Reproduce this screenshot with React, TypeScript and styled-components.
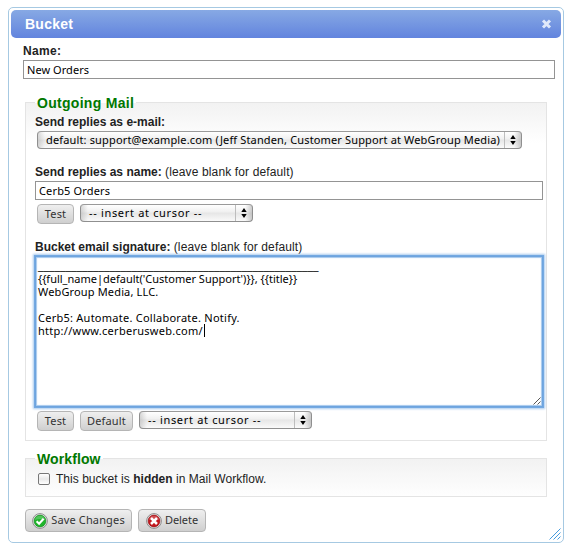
import React from 'react';
import styled, { createGlobalStyle } from 'styled-components';

const GlobalStyle = createGlobalStyle`
  *, *::before, *::after { box-sizing: border-box; }
  body {
    margin: 0;
    background: #fff;
    color: #222;
    font: 12px/16px "Liberation Sans", Arial, sans-serif;
  }
`;

const uiFont = '"Noto Sans", "Open Sans", sans-serif';

const Dialog = styled.section`
  position: relative;
  width: 556px;
  height: 536px;
  margin: 7px 0 0 8px;
  padding: 2px;
  border: 1px solid #a6c9e2;
  border-radius: 5px;
`;

const TitleBar = styled.header`
  display: flex;
  align-items: center;
  justify-content: space-between;
  height: 28px;
  padding: 0 9px 0 14px;
  border-radius: 5px;
  background: linear-gradient(#87a9e4, #6284de);
  color: #fff;
`;

const Title = styled.h1`
  margin: 0;
  font-size: 14px;
  line-height: 28px;
  letter-spacing: 0.25px;
`;

const Form = styled.form`
  padding: 5px 6px 0 12px;
`;

const Spacer = styled.div<{ $h: number }>`
  height: ${p => p.$h}px;
`;

const Label = styled.div<{ $track?: number }>`
  height: 16px;
  white-space: nowrap;
  letter-spacing: ${p => p.$track ?? 0}px;
`;

const Hint = styled.span`
  letter-spacing: 0.13px;
`;

const TextField = styled.input<{ $height: number; $track: number }>`
  display: block;
  width: 100%;
  height: ${p => p.$height}px;
  padding: 0 3px 1px;
  border: 1px solid #949494;
  border-radius: 0;
  background: #fff;
  color: #000;
  font: 11px/16px ${uiFont};
  letter-spacing: ${p => p.$track}px;
  outline: none;
`;

const Group = styled.fieldset<{ $top: number; $height: number }>`
  min-width: 0;
  width: 522px;
  height: ${p => p.$height}px;
  margin: ${p => p.$top}px 0 0 2px;
  padding: 0 3px 0 9px;
  border: 1px solid #e4e4e4;
  background: linear-gradient(#f2f2f2, #fff 40px);
`;

const Legend = styled.legend<{ $track: number }>`
  height: 16px;
  padding: 0 2px;
  color: #007800;
  font-size: 14px;
  font-weight: bold;
  line-height: 18px;
  letter-spacing: ${p => p.$track}px;
`;

const Controls = styled.div`
  display: flex;
  align-items: flex-start;
  gap: 6px;
  padding-left: 2px;
`;

const SelectBox = styled.div<{ $width: number; $track: number }>`
  display: flex;
  justify-content: space-between;
  width: ${p => p.$width}px;
  height: 18px;
  padding-left: 8px;
  border: 1px solid #8f8f8f;
  border-top-color: #9a9a9a;
  border-radius: 4px;
  background:
    linear-gradient(90deg, rgba(150, 150, 150, 0.35), transparent 7px, transparent calc(100% - 7px), rgba(150, 150, 150, 0.45)),
    linear-gradient(#fff, #f0f0f0 44%, #e6e6e6 50%, #fafafa);
  color: #000;
  font: 11px/16px ${uiFont};
  letter-spacing: ${p => p.$track}px;
  white-space: nowrap;
`;

const Stepper = styled.span`
  display: flex;
  align-items: center;
  justify-content: center;
  width: 17px;
  flex: none;
  border-left: 1px solid #bdbdbd;
`;

const Button = styled.button<{ $width: number; $height?: number; $track?: number }>`
  display: flex;
  align-items: center;
  justify-content: center;
  gap: 3px;
  width: ${p => p.$width}px;
  height: ${p => p.$height ?? 20}px;
  padding: 0;
  border: 1px solid #b5b5b5;
  border-radius: 4px;
  background: linear-gradient(#efefef, #cfcfcf);
  color: #333;
  font: 11px/16px ${uiFont};
  letter-spacing: ${p => p.$track ?? 0.15}px;
  white-space: nowrap;
`;

const ButtonText = styled.span`
  padding-bottom: 2px;
`;

const Editor = styled.div`
  position: relative;
  height: 151px;
  padding: 3px 2px;
  border: 1px solid #6ea4de;
  background: #fff;
  box-shadow: 0 0 0 1px #74a9e2, 0 0 2px 2px #a9caee, inset 0 0 1px 1px #a5c8ee;
  color: #000;
  font: 11px/13px ${uiFont};
  outline: none;
`;

const Line = styled.div<{ $track?: number }>`
  display: flex;
  height: 13px;
  white-space: pre;
  letter-spacing: ${p => p.$track ?? 0}px;
`;

const Rule = styled(Line)`
  height: 12px;
  line-height: 12px;
  font-family: "DejaVu Sans", sans-serif;
`;

const Caret = styled.span`
  width: 1px;
  height: 13px;
  margin-left: 1px;
  background: #000;
`;

const Corner = styled.svg<{ $offset: number }>`
  position: absolute;
  right: ${p => p.$offset}px;
  bottom: ${p => p.$offset}px;
`;

const CheckRow = styled.label`
  display: flex;
  align-items: center;
  height: 20px;
  margin-top: 3px;
  padding-left: 3px;
  letter-spacing: 0.03px;
`;

const CheckBox = styled.input`
  appearance: none;
  width: 12px;
  height: 12px;
  margin: 0 6px 0 0;
  border: 1px solid #777;
  border-radius: 2px;
  background: linear-gradient(#fff, #e9e9e9 50%, #fff);
`;

const Actions = styled.div`
  display: flex;
  gap: 6px;
  margin: 12px 0 0 2px;
`;

function Select({ text, width, track }: { text: string; width: number; track: number }) {
  return (
    <SelectBox $width={width} $track={track}>
      <span>{text}</span>
      <Stepper>
        <svg width="6" height="10" viewBox="0 0 6 10">
          <path d="M3 0 5.7 4H.3zM3 10 5.7 6H.3z" fill="#000" />
        </svg>
      </Stepper>
    </SelectBox>
  );
}

function StatusIcon({ ok }: { ok?: boolean }) {
  return (
    <svg width="16" height="16" viewBox="0 0 16 16">
      <circle cx="8" cy="8" r="7.4" fill="#e9e9e9" stroke="#8c8c8c" strokeWidth="1" />
      <circle cx="8" cy="8" r="5.9" fill={ok ? '#20b52c' : '#c3181e'} stroke={ok ? '#148b20' : '#981116'} strokeWidth=".7" />
      <path d="M2.8 7a5.3 5.3 0 0 1 10.4 0Q8 5 2.8 7z" fill="#fff" opacity=".22" />
      {ok ? (
        <path d="m4.6 8.2 2.5 2.5 4.5-5" fill="none" stroke="#fff" strokeWidth="2.1" />
      ) : (
        <path d="m5 5 6 6m0-6-6 6" fill="none" stroke="#fff" strokeWidth="2.5" />
      )}
    </svg>
  );
}

export default function App() {
  return (
    <>
      <GlobalStyle />
      <Dialog>
        <TitleBar>
          <Title>Bucket</Title>
          <svg width="11" height="10" viewBox="0 0 11 10">
            <path d="m2 1.5 7 7m0-7-7 7" stroke="#e0e9fa" strokeWidth="3" />
          </svg>
        </TitleBar>
        <Form>
          <Label $track={0.3}><b>Name:</b></Label>
          <Spacer $h={1} />
          <TextField $height={19} $track={0.05} defaultValue="New Orders" />

          <Group $top={15} $height={347}>
            <Legend $track={0.29}>Outgoing Mail</Legend>
            <Spacer $h={4} />
            <Label><b>Send replies as e-mail:</b></Label>
            <Spacer $h={1} />
            <Controls>
              <Select width={485} track={0.15} text="default: support@example.com (Jeff Standen, Customer Support at WebGroup Media)" />
            </Controls>
            <Spacer $h={15} />
            <Label><b>Send replies as name:</b> <Hint>(leave blank for default)</Hint></Label>
            <Spacer $h={1} />
            <TextField $height={19} $track={0.15} defaultValue="Cerb5 Orders" />
            <Spacer $h={4} />
            <Controls>
              <Button type="button" $width={37}>Test</Button>
              <Select width={173} track={0.67} text="-- insert at cursor --" />
            </Controls>
            <Spacer $h={15} />
            <Label><b>Bucket email signature:</b> <Hint>(leave blank for default)</Hint></Label>
            <Spacer $h={1} />
            <Editor>
              <Rule>{'_'.repeat(51)}</Rule>
              <Line>{"{{full_name|default('Customer Support')}}, {{title}}"}</Line>
              <Line $track={0.15}>WebGroup Media, LLC.</Line>
              <Line />
              <Line $track={0.25}>Cerb5: Automate. Collaborate. Notify.</Line>
              <Line $track={0.27}>http://www.cerberusweb.com/<Caret /></Line>
              <Corner $offset={1} width="8" height="8" viewBox="0 0 8 8">
                <path d="M.5 7.5l7-7M4.5 7.5l3-3" stroke="#555" fill="none" />
              </Corner>
            </Editor>
            <Spacer $h={4} />
            <Controls>
              <Button type="button" $width={37}>Test</Button>
              <Button type="button" $width={53}>Default</Button>
              <Select width={173} track={0.67} text="-- insert at cursor --" />
            </Controls>
          </Group>

          <Group $top={9} $height={47}>
            <Legend $track={0.1}>Workflow</Legend>
            <CheckRow>
              <CheckBox type="checkbox" />
              <span>This bucket is <b>hidden</b> in Mail Workflow.</span>
            </CheckRow>
          </Group>

          <Actions>
            <Button type="button" $width={107} $height={23}><StatusIcon ok /><ButtonText>Save Changes</ButtonText></Button>
            <Button type="button" $width={68} $height={23} $track={-0.05}><StatusIcon /><ButtonText>Delete</ButtonText></Button>
          </Actions>
        </Form>
        <Corner $offset={2} width="12" height="12" viewBox="0 0 12 12">
          <path d="M.5 11.5l11-11M4.5 11.5l7-7M8.5 11.5l3-3" stroke="#469bdd" fill="none" />
        </Corner>
      </Dialog>
    </>
  );
}
